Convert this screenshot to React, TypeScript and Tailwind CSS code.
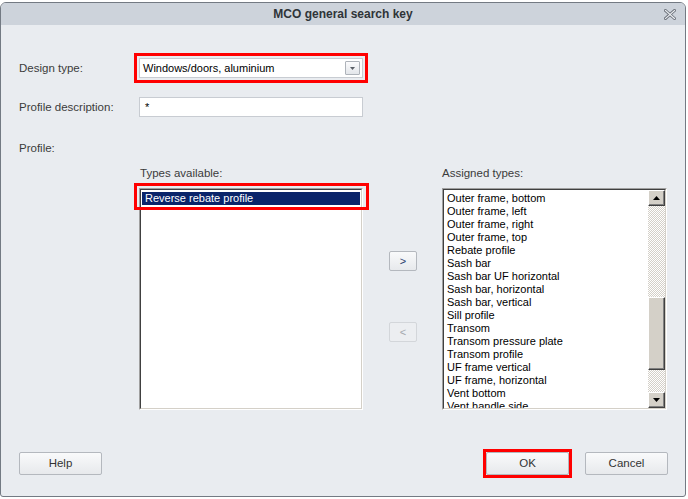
import React from 'react'

const assigned = [
  'Outer frame, bottom',
  'Outer frame, left',
  'Outer frame, right',
  'Outer frame, top',
  'Rebate profile',
  'Sash bar',
  'Sash bar UF horizontal',
  'Sash bar, horizontal',
  'Sash bar, vertical',
  'Sill profile',
  'Transom',
  'Transom pressure plate',
  'Transom profile',
  'UF frame vertical',
  'UF frame, horizontal',
  'Vent bottom',
  'Vent handle side',
]

const label = "font-['Liberation_Sans',Arial,sans-serif] text-[11.5px] leading-[14px] text-[#3b3b3b]"
const listText = "font-['Liberation_Sans',Arial,sans-serif] text-[11px] leading-[13px] text-black"

function CloseIcon() {
  return (
    <svg width="12" height="11" viewBox="0 0 12 11">
      <path d="M1.5 1.5 L10.5 9.5 M10.5 1.5 L1.5 9.5" stroke="#6b7079" strokeWidth="3" strokeLinecap="square" />
      <path d="M1.5 1.5 L10.5 9.5 M10.5 1.5 L1.5 9.5" stroke="#e9ecf0" strokeWidth="1.2" strokeLinecap="square" />
    </svg>
  )
}

function Arrow({ dir }: { dir: 'up' | 'down' }) {
  return (
    <svg width="7" height="4" viewBox="0 0 7 4">
      {dir === 'up' ? <path d="M0 4 L3.5 0 L7 4 Z" fill="#000" /> : <path d="M0 0 L3.5 4 L7 0 Z" fill="#000" />}
    </svg>
  )
}

function ScrollButton({ dir }: { dir: 'up' | 'down' }) {
  return (
    <div className="h-[16px] w-full border border-t-white border-l-white border-r-[#404040] border-b-[#404040] bg-[#d4d0c8] flex items-center justify-center shadow-[inset_-1px_-1px_0_#808080]">
      <Arrow dir={dir} />
    </div>
  )
}

function ListBox({ children, scroll }: { children: React.ReactNode; scroll?: boolean }) {
  return (
    <div className="h-[222px] border border-t-[#a0a0a0] border-l-[#a0a0a0] border-r-white border-b-white">
      <div className="h-full flex border border-t-[#404040] border-l-[#404040] border-r-[#d4d0c8] border-b-[#d4d0c8] bg-white overflow-hidden">
        <div className="flex-1 pt-[1px] overflow-hidden">{children}</div>
        {scroll && (
          <div className="w-[17px] h-full flex flex-col bg-[image:repeating-conic-gradient(#d4d0c8_0_25%,#ffffff_0_50%)] bg-[length:2px_2px]">
            <ScrollButton dir="up" />
            <div className="flex-1 flex flex-col pt-[91px]">
              <div className="h-[73px] border border-t-white border-l-white border-r-[#404040] border-b-[#404040] bg-[#d4d0c8] shadow-[inset_-1px_-1px_0_#808080]" />
            </div>
            <ScrollButton dir="down" />
          </div>
        )}
      </div>
    </div>
  )
}

function Button({ children, className = '' }: { children: React.ReactNode; className?: string }) {
  return (
    <div
      className={`h-[23px] w-[83px] rounded-[2px] border border-[#b4b8be] bg-linear-to-b from-[#f9fafb] to-[#e7e9ec] flex items-center justify-center font-['Liberation_Sans',Arial,sans-serif] text-[11.5px] text-[#333] ${className}`}
    >
      {children}
    </div>
  )
}

export default function App() {
  return (
    <div className="w-[688px] h-[499px] bg-white overflow-hidden">
      <div className="mt-[2px] w-[686px] h-[495px] border border-[#737a83] rounded-t-[6px] rounded-b-[3px] bg-[#e9ecf0] flex flex-col overflow-hidden">
        {/* title bar */}
        <div className="relative h-[22px] bg-[#cdd3db] flex items-center justify-center">
          <span className="font-['Liberation_Sans',Arial,sans-serif] font-bold text-[12px] text-[#2f3438]">
            MCO general search key
          </span>
          <div className="absolute right-[9px] top-[6px]">
            <CloseIcon />
          </div>
        </div>

        <div className="flex-1 flex flex-col pl-[18px] pr-[17px]">
          {/* design type */}
          <div className="mt-[33px] flex items-center h-[20px]">
            <div className={`w-[120px] ${label}`}>Design type:</div>
            <div className="relative w-[224px] h-[20px] bg-white border border-[#c8ccd2] flex items-center outline-[3px] outline-solid outline-[#ff0000] outline-offset-[2px]">
              <span className={`pl-[3px] ${listText} text-[11.5px]`}>Windows/doors, aluminium</span>
              <div className="absolute right-[2px] top-[2px] w-[15px] h-[14px] border border-[#aeb3ba] rounded-[1px] bg-linear-to-b from-[#fbfbfc] to-[#e3e6ea] flex items-center justify-center">
                <svg width="5" height="3" viewBox="0 0 5 3">
                  <path d="M0 0 L2.5 3 L5 0 Z" fill="#5a5f66" />
                </svg>
              </div>
            </div>
          </div>

          {/* profile description */}
          <div className="mt-[19px] flex items-center h-[20px]">
            <div className={`w-[120px] ${label}`}>Profile description:</div>
            <div className="w-[224px] h-[20px] bg-white border border-[#c8ccd2] flex items-center pl-[5px]">
              <span className={listText}>*</span>
            </div>
          </div>

          <div className={`mt-[24px] h-[14px] ${label}`}>Profile:</div>

          {/* lists */}
          <div className="mt-[11px] flex pl-[120px]">
            <div className="w-[224px] flex flex-col">
              <div className={`pl-[1px] ${label}`}>Types available:</div>
              <div className="relative mt-[8px]">
                <ListBox>
                  <div className={`mx-[1px] mt-[1px] h-[13px] bg-[#0a246a] pl-[3px] ${listText} text-white`}>
                    Reverse rebate profile
                  </div>
                </ListBox>
                <div className="absolute -left-[5px] -top-[5px] w-[235px] h-[27px] border-[3px] border-[#ff0000]" />
              </div>
            </div>

            <div className="w-[79px] flex flex-col items-center pt-[85px] pl-[1px]">
              <div className="w-[28px] h-[20px] rounded-[2px] border border-[#b4b8be] bg-linear-to-b from-[#f9fafb] to-[#e7e9ec] flex items-center justify-center font-['Liberation_Sans',Arial,sans-serif] text-[11px] text-[#2b3f6e]">
                &gt;
              </div>
              <div className="mt-[51px] w-[28px] h-[20px] rounded-[2px] border border-[#d3d6da] bg-[#eceef1] flex items-center justify-center font-['Liberation_Sans',Arial,sans-serif] text-[11px] text-[#a4a8ae]">
                &lt;
              </div>
            </div>

            <div className="w-[225px] flex flex-col">
              <div className={label}>Assigned types:</div>
              <div className="mt-[8px]">
                <ListBox scroll>
                  <div className="pt-[1px]">
                    {assigned.map((t) => (
                      <div key={t} className={`h-[13px] pl-[3px] whitespace-nowrap ${listText}`}>
                        {t}
                      </div>
                    ))}
                  </div>
                </ListBox>
              </div>
            </div>
          </div>

          {/* bottom buttons */}
          <div className="mt-[39px] flex items-center">
            <Button className="w-[82px]">Help</Button>
            <div className="flex-1" />
            <div className="border-[3px] border-[#ff0000] -mr-[3px]">
              <Button>OK</Button>
            </div>
            <Button className="ml-[16px]">Cancel</Button>
          </div>
        </div>
      </div>
    </div>
  )
}
